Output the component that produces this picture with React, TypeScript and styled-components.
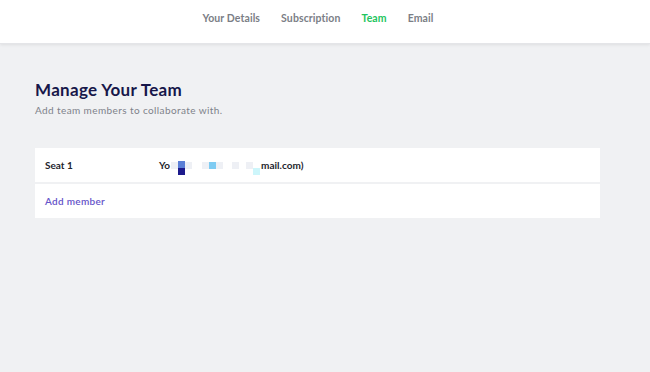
import React from "react";
import styled, { createGlobalStyle } from "styled-components";

const Global = createGlobalStyle`
  html, body { margin: 0; padding: 0; background: #f0f1f3; }
  body { font-family: "Lato", "Open Sans", sans-serif; }
`;

const Page = styled.div`
  min-height: 372px;
  background: #f0f1f3;
`;

const Header = styled.header`
  height: 44px;
  background: #fff;
  box-shadow: 0 1px 3px rgba(0,0,0,0.08);
  border-bottom: 1px solid #e4e5e8;
  box-sizing: border-box;
  display: flex;
  justify-content: center;
  align-items: flex-start;
  padding-top: 12px;
  gap: 21px;
  padding-right: 14px;
`;

const NavItem = styled.a<{ $active?: boolean }>`
  font-size: 10.5px;
  font-weight: 700;
  letter-spacing: 0.1px;
  color: ${(p) => (p.$active ? "#22c55e" : "#7b7e86")};
  text-decoration: none;
`;

const Main = styled.main`
  padding: 35px 50px 0 35px;
`;

const Title = styled.h1`
  margin: 0;
  font-size: 17px;
  font-weight: 700;
  color: #17174a;
  letter-spacing: 0.3px;
`;

const Subtitle = styled.p`
  margin: 4px 0 0;
  font-size: 10px;
  color: #7e828a;
  letter-spacing: 0.4px;
`;

const Card = styled.div`
  margin-top: 32px;
  width: 565px;
  background: #fff;
  display: flex;
  flex-direction: column;
`;

const Row = styled.div`
  height: 34px;
  display: flex;
  align-items: center;
  padding: 0 10px;
  font-size: 10px;
  & + & { border-top: 2px solid #f0f1f3; }
`;

const SeatLabel = styled.span`
  width: 114px;
  color: #23242c;
  font-weight: 700;
`;

const Email = styled.span`
  display: flex;
  align-items: center;
  color: #23242c;
  font-weight: 700;
`;

const Pix = styled.span<{ $c: string; $dy?: number }>`
  display: inline-block;
  width: 7px;
  height: 7px;
  background: ${(p) => p.$c};
  transform: translateY(${(p) => p.$dy ?? 0}px);
`;

const Stack = styled.span`
  display: inline-flex;
  flex-direction: column;
  transform: translateY(3px);
`;

const Gap = styled.span<{ $w: number }>`
  display: inline-block;
  width: ${(p) => p.$w}px;
`;

const AddLink = styled.a`
  color: #6553c9;
  font-size: 10px;
  font-weight: 600;
  letter-spacing: 0.3px;
  text-decoration: none;
`;

export default function App() {
  return (
    <Page>
      <Global />
      <Header>
        <NavItem>Your Details</NavItem>
        <NavItem>Subscription</NavItem>
        <NavItem $active>Team</NavItem>
        <NavItem>Email</NavItem>
      </Header>
      <Main>
        <Title>Manage Your Team</Title>
        <Subtitle>Add team members to collaborate with.</Subtitle>
        <Card>
          <Row>
            <SeatLabel>Seat 1</SeatLabel>
            <Email>
              Yo
              <Gap $w={1} />
              <Pix $c="#eef0f5" />
              <Stack>
                <Pix $c="#5b7fd6" />
                <Pix $c="#1d1a8c" />
              </Stack>
              <Pix $c="#eef0f5" />
              <Gap $w={10} />
              <Pix $c="#eef0f5" />
              <Pix $c="#7ecbf2" />
              <Pix $c="#eef0f5" />
              <Gap $w={9} />
              <Pix $c="#eef0f5" />
              <Gap $w={7} />
              <Pix $c="#eef0f5" />
              <Pix $c="#cdf6fb" $dy={6} />
              <Gap $w={1} />
              mail.com)
            </Email>
          </Row>
          <Row>
            <AddLink>Add member</AddLink>
          </Row>
        </Card>
      </Main>
    </Page>
  );
}
